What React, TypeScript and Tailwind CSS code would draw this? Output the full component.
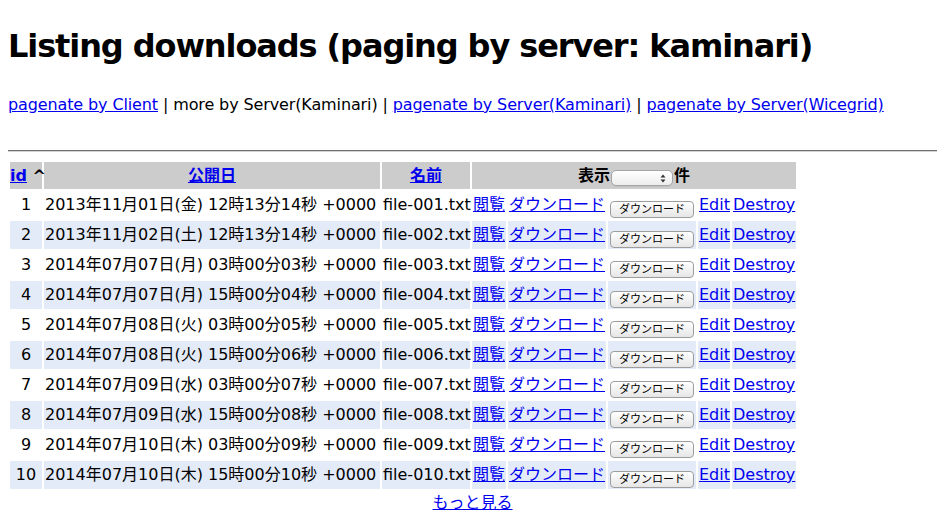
const rows = [
  { id: 1, date: "2013年11月01日(金) 12時13分14秒 +0000" },
  { id: 2, date: "2013年11月02日(土) 12時13分14秒 +0000" },
  { id: 3, date: "2014年07月07日(月) 03時00分03秒 +0000" },
  { id: 4, date: "2014年07月07日(月) 15時00分04秒 +0000" },
  { id: 5, date: "2014年07月08日(火) 03時00分05秒 +0000" },
  { id: 6, date: "2014年07月08日(火) 15時00分06秒 +0000" },
  { id: 7, date: "2014年07月09日(水) 03時00分07秒 +0000" },
  { id: 8, date: "2014年07月09日(水) 15時00分08秒 +0000" },
  { id: 9, date: "2014年07月10日(木) 03時00分09秒 +0000" },
  { id: 10, date: "2014年07月10日(木) 15時00分10秒 +0000" },
];

const link = "text-[#0000ee] underline";

function SelectBox() {
  return (
    <span className="mx-[1px] inline-flex h-[16px] w-[62px] items-center justify-end rounded-[5px] border border-[#a6a6a6] bg-gradient-to-b from-white to-[#ededed] pr-[6px] align-[-2px] shadow-[0_1px_0_rgba(0,0,0,0.05)]">
      <svg width="6" height="9" viewBox="0 0 6 9">
        <path d="M3 0.5 L5.5 3.5 H0.5 Z" fill="#333" />
        <path d="M3 8.5 L5.5 5.5 H0.5 Z" fill="#333" />
      </svg>
    </span>
  );
}

export default function App() {
  return (
    <div className="min-h-screen bg-white p-2 font-['DejaVu_Sans','Noto_Sans_CJK_JP',sans-serif] text-[16px] text-black">
      <h1 className="mt-[18px] text-[32px] font-bold leading-[40px] tracking-[-1.1px]">
        Listing downloads (paging by server: kaminari)
      </h1>

      <p className="mt-[27px] leading-[24px] tracking-[-0.12px]">
        <a className={link} href="#">pagenate by Client</a> | more by Server(Kaminari) |{" "}
        <a className={link} href="#">pagenate by Server(Kaminari)</a> |{" "}
        <a className={link} href="#">pagenate by Server(Wicegrid)</a>
      </p>

      <div className="mt-[33px] h-[2px] border-t border-b border-t-[#6f6f6f] border-b-[#d4d4d4]" />

      <table className="mt-[8px] w-[790px] table-fixed border-separate border-spacing-[2px] leading-[24px]">
        <colgroup>
          <col className="w-[32px]" />
          <col className="w-[336px]" />
          <col className="w-[88px]" />
          <col className="w-[34px]" />
          <col className="w-[98px]" />
          <col className="w-[88px]" />
          <col className="w-[32px]" />
          <col className="w-[64px]" />
        </colgroup>
        <thead>
          <tr>
            <th className="h-[27px] whitespace-nowrap bg-[#cccccc] p-0 text-center font-bold">
              <a className={link} href="#">id</a> ^
            </th>
            <th className="h-[27px] bg-[#cccccc] p-0 text-center font-bold">
              <a className={link} href="#">公開日</a>
            </th>
            <th className="h-[27px] bg-[#cccccc] p-0 text-center font-bold">
              <a className={link} href="#">名前</a>
            </th>
            <th colSpan={5} className="h-[27px] bg-[#cccccc] p-0 text-center font-bold">
              表示<SelectBox />件
            </th>
          </tr>
        </thead>
        <tbody>
          {rows.map((r) => {
            const bg = r.id % 2 === 0 ? "bg-[#e4ebf8]" : "";
            const td = `h-[28px] p-[1px] whitespace-nowrap ${bg}`;
            const name = `file-${String(r.id).padStart(3, "0")}.txt`;
            return (
              <tr key={r.id}>
                <td className={`${td} text-center`}>{r.id}</td>
                <td className={td}>{r.date}</td>
                <td className={td}>{name}</td>
                <td className={td}>
                  <a className={link} href="#">閲覧</a>
                </td>
                <td className={td}>
                  <a className={link} href="#">ダウンロード</a>
                </td>
                <td className={`${td} text-center`}>
                  <button className="inline-flex h-[17px] w-[84px] items-center justify-center rounded-[4px] border border-[#9d9d9d] bg-gradient-to-b from-white to-[#e6e6e6] align-[-3px] text-[11px] leading-none text-black">
                    ダウンロード
                  </button>
                </td>
                <td className={td}>
                  <a className={link} href="#">Edit</a>
                </td>
                <td className={td}>
                  <a className={link} href="#">Destroy</a>
                </td>
              </tr>
            );
          })}
        </tbody>
      </table>

      <p className="text-center leading-[24px]">
        <a className={link} href="#">もっと見る</a>
      </p>
    </div>
  );
}
